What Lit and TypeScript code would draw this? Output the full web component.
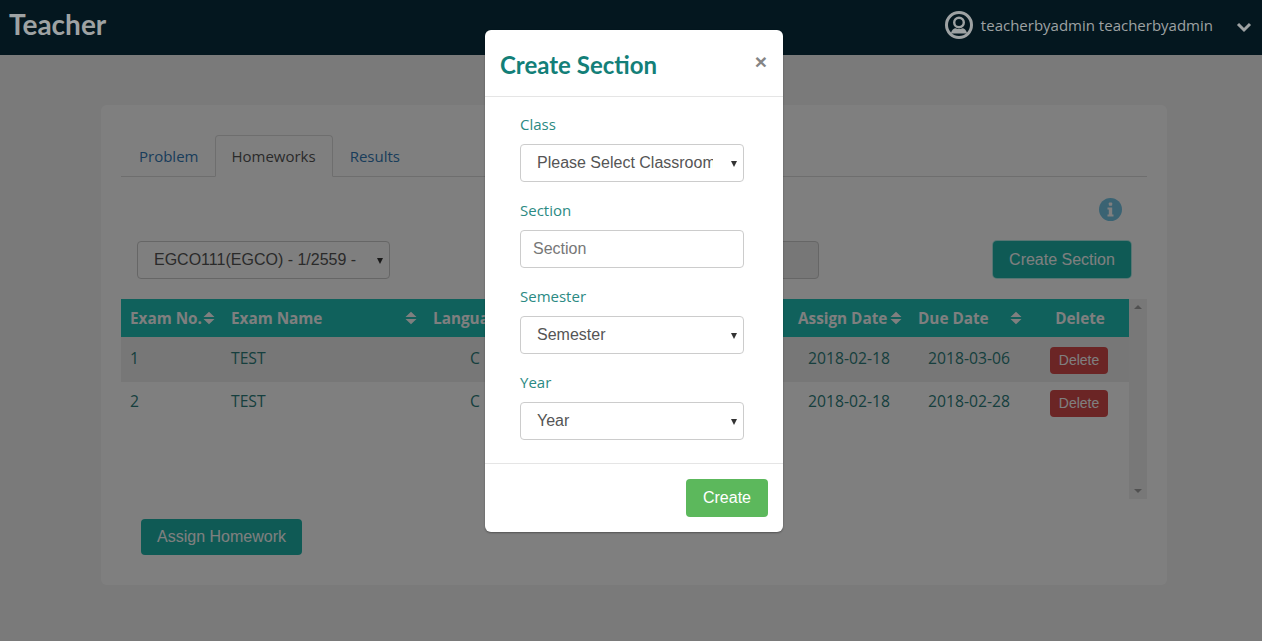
import { LitElement, css, html, svg } from "lit";
import { customElement } from "lit/decorators.js";

const sortIcon = html`<svg class="sort" viewBox="0 0 12 14" width="12" height="14">
  <path d="M.5 6h11L6 .8zM.5 8h11L6 13.200z" fill="currentColor"></path>
</svg>`;

const rows = [
  { no: "1", name: "TEST", lang: "C", assign: "2018-02-18", due: "2018-03-06" },
  { no: "2", name: "TEST", lang: "C", assign: "2018-02-18", due: "2018-02-28" },
];

@customElement("app-root")
export class AppRoot extends LitElement {
  static styles = css`
    :host {
      display: block;
      position: relative;
      height: 641px;
      overflow: hidden;
      background: #f5f5f5;
      font-family: "Open Sans", "Liberation Sans", sans-serif;
      font-size: 15px;
    }

    * {
      box-sizing: border-box;
    }

    .nav {
      position: relative;
      z-index: 2;
      display: flex;
      align-items: center;
      height: 55px;
      padding: 0 10px 6px 9px;
      background: #04171f;
      color: #9ea2a3;
    }

    .brand {
      flex: 1;
      margin-bottom: 2px;
      font-family: Lato, sans-serif;
      font-size: 28px;
      font-weight: 700;
    }

    .avatar {
      margin-bottom: -1px;
    }

    .user {
      margin: 0 23px 0 8px;
      font-size: 15px;
    }

    .chevron {
      margin-top: 5px;
    }

    .card {
      width: 1066px;
      height: 480px;
      margin: 50px 0 0 101px;
      padding: 30px 20px 0;
      border-radius: 6px;
      background: #fff;
    }

    .tabs {
      display: flex;
      height: 42px;
      padding-left: 1px;
      border-bottom: 1px solid #ddd;
    }

    .tabs a {
      height: 42px;
      margin-right: 1px;
      padding: 10px 15px 10px 16px;
      border: 1px solid transparent;
      border-radius: 4px 4px 0 0;
      color: #337ab7;
    }

    .tabs a.active {
      margin-right: 0;
      padding: 10px 16px 10px 15px;
      border-color: #ddd #ddd #fff;
      background: #fff;
      color: #555;
    }

    .info {
      display: flex;
      justify-content: flex-end;
      padding: 21px 25px 0 0;
      height: 64px;
    }

    .toolbar {
      display: flex;
      align-items: flex-start;
      height: 58px;
      padding-left: 16px;
    }

    .picker {
      position: relative;
      display: block;
    }

    .picker::after {
      content: "";
      position: absolute;
      top: 17px;
      right: 7px;
      border-left: 3.500px solid transparent;
      border-right: 3.500px solid transparent;
      border-top: 6px solid #333;
      pointer-events: none;
    }

    select,
    input {
      display: block;
      width: 100%;
      height: 38px;
      border: 1px solid #ccc;
      border-radius: 4px;
      background-color: #fff;
      color: #555;
      font-family: "Liberation Sans", sans-serif;
      font-size: 16px;
    }

    select {
      padding: 0 30px 2px 16px;
      appearance: none;
    }

    input {
      padding: 0 12px;
    }

    input::placeholder {
      color: #777;
    }

    .toolbar .picker {
      width: 253px;
    }

    .toolbar .locked {
      flex: none;
      width: 200px;
      margin: 0 174px 0 229px;
      background: #eee;
    }

    .btn {
      border: 0;
      border-radius: 4px;
      color: #fff;
      font-family: "Liberation Sans", sans-serif;
      font-size: 16px;
    }

    .teal {
      background: #1eb5ab;
    }

    .toolbar .teal {
      width: 138px;
      height: 37px;
      box-shadow: 0 0 0 1px rgba(32, 194, 184, 0.35);
    }

    .scroller {
      display: flex;
      height: 200px;
    }

    table {
      width: 1008px;
      height: 126px;
      border-collapse: collapse;
      table-layout: fixed;
    }

    th {
      height: 38px;
      padding: 0 7px 0 9px;
      background: #20c2b8;
      color: #fff;
      font-size: 15.300px;
      font-weight: 700;
      text-align: left;
      white-space: nowrap;
    }

    th .head {
      display: flex;
      justify-content: space-between;
      align-items: center;
    }

    th.center {
      text-align: center;
    }

    td {
      padding: 8px 9px;
      color: #2c7f7c;
      font-size: 15.700px;
      vertical-align: top;
    }

    td.center {
      text-align: center;
    }

    tbody tr:first-child td {
      padding-top: 10px;
      background: #eee;
    }

    .danger {
      display: block;
      width: 58px;
      height: 27px;
      margin: 0 auto;
      padding: 0 0 2px;
      background: #d64a4a;
      font-size: 14px;
    }

    .track {
      display: flex;
      flex-direction: column;
      justify-content: space-between;
      align-items: center;
      width: 18px;
      padding: 6px 0;
      background: #f1f1f1;
    }

    .arrow {
      width: 0;
      height: 0;
      border-left: 4px solid transparent;
      border-right: 4px solid transparent;
    }

    .arrow.up {
      border-bottom: 4px solid #a3a3a3;
    }

    .arrow.down {
      border-top: 4px solid #a3a3a3;
    }

    .assign {
      display: block;
      width: 161px;
      height: 36px;
      margin: 20px 0 0 20px;
    }

    .backdrop {
      position: absolute;
      inset: 0;
      z-index: 1;
      background: rgba(0, 0, 0, 0.5);
    }

    .modal {
      position: absolute;
      z-index: 3;
      top: 30px;
      left: 485px;
      width: 298px;
      height: 502px;
      border-radius: 6px;
      background: #fff;
      box-shadow: 0 1px 2px rgba(0, 0, 0, 0.35);
    }

    .modal header {
      display: flex;
      justify-content: space-between;
      align-items: center;
      height: 67px;
      padding: 0 16px 0 15px;
      border-bottom: 1px solid #e5e5e5;
    }

    .modal h2 {
      margin: 2px 0 0;
      color: #137f78;
      font-family: Lato, sans-serif;
      font-size: 24px;
      font-weight: 700;
    }

    .close {
      margin-bottom: 3px;
      color: #858585;
      font-family: "Liberation Sans", sans-serif;
      font-size: 21px;
      font-weight: 700;
    }

    .form {
      display: flex;
      flex-direction: column;
      height: 366px;
      padding: 17px 39px 0 35px;
    }

    .form label {
      height: 20px;
      margin-bottom: 10px;
      color: #2b8a83;
      line-height: 20px;
    }

    .form .picker,
    .form input {
      width: 224px;
      margin-bottom: 18px;
    }

    .modal footer {
      display: flex;
      justify-content: flex-end;
      padding: 15px;
      border-top: 1px solid #e5e5e5;
    }

    .success {
      width: 82px;
      height: 38px;
      background: #5cb85c;
    }
  `;

  render() {
    return html`
      <div class="nav">
        <div class="brand">Teacher</div>
        <svg class="avatar" viewBox="0 0 28 28" width="28" height="28" fill="none" stroke="currentColor">
          <circle cx="14" cy="14" r="12.500" stroke-width="3"></circle>
          <circle cx="14" cy="11.500" r="4.800" stroke-width="2.400"></circle>
          ${svg`<path d="M5.800 22.500c.8-3.600 3-5.300 5-5.300 1 .6 2 .9 3.200.9s2.200-.3 3.200-.9c2 0 4.200 1.700 5 5.300" fill="currentColor" stroke="none"></path>`}
        </svg>
        <span class="user">teacherbyadmin teacherbyadmin</span>
        <svg class="chevron" viewBox="0 0 16 12" width="16" height="12" fill="none" stroke="currentColor" stroke-width="3">
          <path d="M2 3l6 6 6-6"></path>
        </svg>
      </div>

      <div class="card">
        <div class="tabs">
          <a>Problem</a>
          <a class="active">Homeworks</a>
          <a>Results</a>
        </div>
        <div class="info">
          <svg viewBox="0 0 23 23" width="23" height="23">
            <circle cx="11.500" cy="11.500" r="11.500" fill="#74c6e6"></circle>
            <rect x="9.800" y="4.500" width="3.400" height="3.200" rx=".8" fill="#fff"></rect>
            <path d="M8.500 9.500h4.700v7h1.300v2h-6v-2h1.300v-5H8.500z" fill="#fff"></path>
          </svg>
        </div>
        <div class="toolbar">
          <span class="picker">
            <select>
              <option>EGCO111(EGCO) - 1/2559 - Section 1</option>
            </select>
          </span>
          <input class="locked" disabled />
          <button class="btn teal">Create Section</button>
        </div>
        <div class="scroller">
          <table>
            <colgroup>
              <col style="width:101px" />
              <col style="width:202px" />
              <col style="width:102px" />
              <col style="width:263px" />
              <col style="width:120px" />
              <col style="width:120px" />
              <col style="width:100px" />
            </colgroup>
            <thead>
              <tr>
                <th><div class="head">Exam No.${sortIcon}</div></th>
                <th><div class="head">Exam Name${sortIcon}</div></th>
                <th>Language</th>
                <th></th>
                <th><div class="head">Assign Date${sortIcon}</div></th>
                <th><div class="head">Due Date${sortIcon}</div></th>
                <th class="center">Delete</th>
              </tr>
            </thead>
            <tbody>
              ${rows.map(
                (r) => html`<tr>
                  <td>${r.no}</td>
                  <td>${r.name}</td>
                  <td class="center">${r.lang}</td>
                  <td></td>
                  <td class="center">${r.assign}</td>
                  <td class="center">${r.due}</td>
                  <td class="center"><button class="btn danger">Delete</button></td>
                </tr>`
              )}
            </tbody>
          </table>
          <div class="track">
            <span class="arrow up"></span>
            <span class="arrow down"></span>
          </div>
        </div>
        <button class="btn teal assign">Assign Homework</button>
      </div>

      <div class="backdrop"></div>

      <div class="modal">
        <header>
          <h2>Create Section</h2>
          <span class="close">×</span>
        </header>
        <div class="form">
          <label>Class</label>
          <span class="picker"><select><option>Please Select Classroom</option></select></span>
          <label>Section</label>
          <input placeholder="Section" />
          <label>Semester</label>
          <span class="picker"><select><option>Semester</option></select></span>
          <label>Year</label>
          <span class="picker"><select><option>Year</option></select></span>
        </div>
        <footer>
          <button class="btn success">Create</button>
        </footer>
      </div>
    `;
  }
}
